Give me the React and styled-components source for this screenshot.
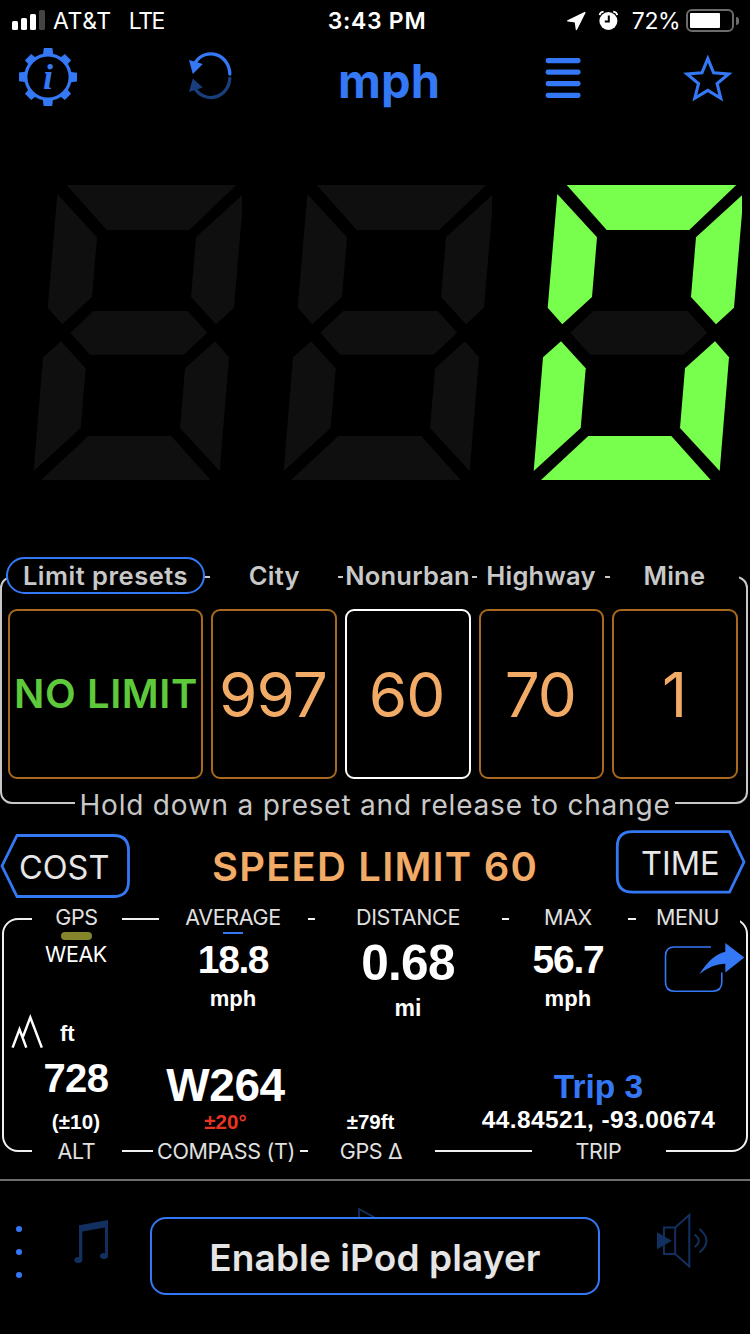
import styled, { createGlobalStyle } from 'styled-components'

const BLUE = '#3478f6'
const DIM_BLUE = '#12305f'
const ORANGE = '#f2ab66'
const GREEN = '#78ff4d'

const SEGMENTS = {
  a: '66.7,185 236.3,185 189.3,230 106.7,230',
  f: '57.3,194 97,237.3 92,297 62.3,324.3 47.7,307.7',
  b: '242,195.3 242,213 234,307.7 216,324.3 191,297 196,237.3',
  g: '93.3,311 187.7,311 207.3,332.7 183.7,354.7 90,354.7 70.3,332.7',
  e: '61,341.3 85.7,368.3 80.7,428 33.7,471 43,357.3',
  c: '215,341.3 229,357.3 219.7,471 180,428 185,368.3',
  d: '88.3,436 171.3,436 210.7,480 41,480',
}

const PRESETS = [
  { name: 'City', value: '997' },
  { name: 'Nonurban', value: '60', active: true },
  { name: 'Highway', value: '70' },
  { name: 'Mine', value: '1' },
]

function Digit({ lit = '' }) {
  return (
    <svg width="250" height="320" viewBox="0 170 250 320">
      {Object.entries(SEGMENTS).map(([key, points]) => (
        <polygon key={key} points={points} fill={lit.includes(key) ? GREEN : '#0f0f0f'} />
      ))}
    </svg>
  )
}

function StatusIcons() {
  return (
    <svg width="54" height="24" viewBox="566 9 54 24">
      <path
        d="M584.8 12.6 576.4 29.4 575.4 21.8 567.8 20.8Z"
        fill="#fff"
        stroke="#fff"
        strokeWidth="1.4"
        strokeLinejoin="round"
      />
      <circle cx="608.4" cy="21" r="9" fill="#fff" />
      <path d="M608.8 15.5V21.6H604.8" fill="none" stroke="#000" strokeWidth="2" />
      <path d="M599.6 15.2Q600 12 603.6 11.6M617.2 15.2Q616.8 12 613.2 11.6" fill="none" stroke="#fff" strokeWidth="1.8" />
    </svg>
  )
}

function GearIcon() {
  return (
    <svg width="60" height="60" viewBox="18 47 60 60">
      <circle cx="48" cy="77" r="22.2" fill="none" stroke={BLUE} strokeWidth="3.2" />
      {[0, 90, 180, 270].map((deg) => (
        <path key={deg} d="M43.8 48H52.4L53.4 56H42.8Z" fill={BLUE} transform={`rotate(${deg} 48 77)`} />
      ))}
      {[45, 135, 225, 315].map((deg) => (
        <path key={deg} d="M43.6 48.8H52.4L53 56H43Z" fill={BLUE} transform={`rotate(${deg} 48 77)`} />
      ))}
      <Info x="48" y="89.4" textAnchor="middle">i</Info>
    </svg>
  )
}

function ReloadIcon() {
  return (
    <svg width="46" height="54" viewBox="188 50 46 54">
      <path d="M229.8 74A19 20.4 0 0 0 195.6 62" fill="none" stroke={BLUE} strokeWidth="3.3" strokeLinecap="round" />
      <path d="M189 60 202.8 64 192.8 74Z" fill={BLUE} />
      <path d="M229.8 78.4A19 20 0 0 1 195.6 89.5" fill="none" stroke="#183e7c" strokeWidth="3.3" strokeLinecap="round" />
      <path d="M189 92 202.8 87.4 192.8 78.4Z" fill="#183e7c" />
    </svg>
  )
}

function ListIcon() {
  return (
    <svg width="36" height="44" viewBox="545 55 36 44">
      {[58, 69.5, 81, 92.8].map((y) => (
        <rect key={y} x="545.6" y={y} width="35" height="5.2" rx="2.4" fill={BLUE} />
      ))}
    </svg>
  )
}

function StarIcon() {
  return (
    <svg width="52" height="50" viewBox="682 52 52 50">
      <path
        d="M707.8 58.6 713.6 72.8 728.6 74 717.1 83.6 720.8 98.3 707.8 90.4 694.8 98.3 698.5 83.6 687 74 702 72.8Z"
        fill="none"
        stroke={BLUE}
        strokeWidth="3.1"
        strokeMiterlimit="10"
      />
    </svg>
  )
}

function ShareIcon() {
  return (
    <svg width="108" height="70" viewBox="638 929 108 70">
      <path
        d="M711 947H674.5Q665.5 947 665.5 956V982Q665.5 991.2 674.5 991.2H712.5Q721.8 991.2 721.8 982V972.5"
        fill="none"
        stroke={BLUE}
        strokeWidth="1.6"
      />
      <path d="M699.3 974.2Q712 954.5 725.3 951.8V943L744.3 957.4 725.3 972.4V963.8Q713 963.6 699.3 974.2Z" fill={BLUE} />
    </svg>
  )
}

function MountainIcon() {
  return (
    <svg width="44" height="38" viewBox="4 1012 44 38">
      <path
        d="M12.6 1047.6 19.5 1029.4 26.3 1047.6M23 1036.6 30.3 1017.4 41.8 1047.6"
        fill="none"
        stroke="#fff"
        strokeWidth="2.5"
        strokeMiterlimit="10"
      />
    </svg>
  )
}

function NoteIcon() {
  return (
    <svg width="36" height="46" viewBox="73 1219 36 46">
      <path d="M79 1225.2 108 1220V1256H105V1227.4L82.3 1231.4V1260H79Z" fill={DIM_BLUE} />
      <ellipse cx="78.4" cy="1260" rx="4" ry="3" fill={DIM_BLUE} />
      <ellipse cx="104" cy="1256" rx="4" ry="3" fill={DIM_BLUE} />
    </svg>
  )
}

function VolumeIcon() {
  return (
    <svg width="54" height="56" viewBox="656 1212 54 56">
      <path
        d="M663.9 1227.4H675.2V1254H663.9ZM675.2 1227.4 689.3 1215V1266.4L675.2 1254"
        fill="none"
        stroke={DIM_BLUE}
        strokeWidth="2"
      />
      <path d="M657 1232.3 671.8 1240.7 657 1249.3Z" fill={DIM_BLUE} />
      <path
        d="M694.6 1234.6Q703 1240.7 694.6 1247M699.4 1229Q713.6 1240.7 699.4 1252.6"
        fill="none"
        stroke={DIM_BLUE}
        strokeWidth="2"
      />
    </svg>
  )
}

function App() {
  return (
    <Screen>
      <GlobalStyle />
      <StatusBar>
        <Carrier>
          <Signal>
            <Bar $h={9} />
            <Bar $h={12} />
            <Bar $h={16} />
            <Bar $h={20} $off />
          </Signal>
          <StatusText $spacing={0.6}>AT&amp;T</StatusText>
          <StatusText $spacing={-1.4} $left={17}>LTE</StatusText>
        </Carrier>
        <Clock>3:43 PM</Clock>
        <StatusRight>
          <StatusIcons />
          <StatusText $spacing={-0.5} $left={12}>72%</StatusText>
          <Battery><Charge /></Battery>
          <Nub />
        </StatusRight>
      </StatusBar>

      <Toolbar>
        <GearIcon />
        <ReloadIcon />
        <Unit>mph</Unit>
        <ListIcon />
        <StarIcon />
      </Toolbar>

      <Display>
        <Digit />
        <Digit />
        <Digit lit="abcdef" />
      </Display>

      <PresetFrame>
        <PresetLegend>
          <Pill>Limit presets</Pill>
          {PRESETS.map((p) => (
            <PresetName key={p.name}>{p.name}</PresetName>
          ))}
        </PresetLegend>
        <PresetGrid>
          <NoLimit>NO LIMIT</NoLimit>
          {PRESETS.map((p) => (
            <Preset key={p.name} $active={p.active}>{p.value}</Preset>
          ))}
        </PresetGrid>
        <Hint>Hold down a preset and release to change</Hint>
      </PresetFrame>

      <LimitRow>
        <Tab>
          <svg width="131" height="66" viewBox="0 833 131 66">
            <path
              d="M17 835.5H113.5Q128.5 835.5 128.5 850.5V881.5Q128.5 896.5 113.5 896.5H17L2 866Z"
              fill="none"
              stroke={BLUE}
              strokeWidth="2.8"
            />
          </svg>
          <TabText $x={19}>COST</TabText>
        </Tab>
        <SpeedLimit>SPEED LIMIT 60</SpeedLimit>
        <Tab $right>
          <svg width="131" height="66" viewBox="615 829 131 66">
            <path
              d="M729.5 831.7H632.5Q617.3 831.7 617.3 846.7V877Q617.3 892.2 632.5 892.2H729.5L744 862Z"
              fill="none"
              stroke={BLUE}
              strokeWidth="2.8"
            />
          </svg>
          <TabText $x={26}>TIME</TabText>
        </Tab>
      </LimitRow>

      <StatsFrame>
        <Legend>
          <Tag $w={90}>GPS</Tag>
          <Tag $w={149} $gap={37}>AVERAGE</Tag>
          <Tag $w={187} $gap={7}>DISTANCE</Tag>
          <Tag $w={119} $gap={7}>MAX</Tag>
          <Tag $w={104} $gap={8}>MENU</Tag>
        </Legend>
        <StatsTop>
          <Cell>
            <GpsBar />
            <Weak>WEAK</Weak>
          </Cell>
          <Cell>
            <Underline />
            <Value $size={39} $h={44} $top={4} $spacing={-1.4}>18.8</Value>
            <Value $size={22} $h={24} $top={5}>mph</Value>
          </Cell>
          <Cell>
            <Value $size={49.5} $h={54} $top={7} $spacing={-0.7}>0.68</Value>
            <Value $size={23} $h={24} $top={6}>mi</Value>
          </Cell>
          <Cell>
            <Value $size={39} $h={44} $top={9} $spacing={-1.2}>56.7</Value>
            <Value $size={22} $h={24} $top={5} $spacing={0.2}>mph</Value>
          </Cell>
          <Cell>
            <ShareIcon />
          </Cell>
        </StatsTop>
        <StatsBottom>
          <Cell>
            <AltUnit>
              <MountainIcon />
              <Value $size={22} $h={34} $top={5}>ft</Value>
            </AltUnit>
            <Value $size={40} $h={40} $top={8} $spacing={-0.5}>728</Value>
            <Value $size={20.5} $h={24} $top={12} $spacing={0.2}>(±10)</Value>
          </Cell>
          <Cell>
            <Value $size={46} $h={48} $top={49} $spacing={-0.4}>W264</Value>
            <Value $size={20.5} $h={24} $top={1} $color="#e93423">±20°</Value>
          </Cell>
          <Cell $left={1}>
            <Value $size={20.5} $h={24} $top={98}>±79ft</Value>
          </Cell>
          <Cell $left={14}>
            <Value $size={33.5} $h={40} $top={55} $color={BLUE}>Trip 3</Value>
            <Value $size={24.5} $h={26} $spacing={0.4}>44.84521, -93.00674</Value>
          </Cell>
        </StatsBottom>
        <Legend>
          <Tag $w={90}>ALT</Tag>
          <Tag $w={147} $gap={31}>COMPASS (T)</Tag>
          <Tag $w={127} $gap={8}>GPS Δ</Tag>
          <Tag $w={134} $gap={97}>TRIP</Tag>
        </Legend>
      </StatsFrame>

      <Player>
        <Dots>
          <Dot />
          <Dot />
          <Dot />
        </Dots>
        <PlayerIcon $top={38}>
          <NoteIcon />
        </PlayerIcon>
        <EnableWrap>
          <PlayHint width="40" height="12" viewBox="356 1206 40 12">
            <path d="M359 1218V1209L380 1220.5" fill="none" stroke={DIM_BLUE} strokeWidth="1.8" />
          </PlayHint>
          <Enable>Enable iPod player</Enable>
        </EnableWrap>
        <PlayerIcon $top={31}>
          <VolumeIcon />
        </PlayerIcon>
      </Player>
    </Screen>
  )
}

export default App


const GlobalStyle = createGlobalStyle`
body{
margin:0;
background:#000;
}
svg{
display:block;
flex-shrink:0;
}
`

const Screen = styled.div`
width:750px;
height:1334px;
overflow:hidden;
background:#000;
color:#fff;
display:flex;
flex-direction:column;
font-family:Inter,"Liberation Sans",sans-serif;
white-space:nowrap;
`

const StatusBar = styled.div`
height:41px;
padding:0 11px 0 12px;
display:grid;
grid-template-columns:1fr auto 1fr;
align-items:center;
`
const Carrier = styled.div`
display:flex;
align-items:center;
`
const Signal = styled.div`
display:flex;
align-items:flex-end;
gap:3px;
height:20px;
margin:-1px 8px 0 0;
`
const Bar = styled.div`
width:6px;
height:${(p) => p.$h}px;
border-radius:1.5px;
background:${(p) => (p.$off ? '#434343' : '#fff')};
`
const StatusText = styled.span`
font-size:23px;
letter-spacing:${(p) => p.$spacing}px;
margin-left:${(p) => p.$left || 0}px;
`
const Clock = styled.span`
font-size:23px;
font-weight:600;
letter-spacing:0.7px;
margin-left:3px;
`
const StatusRight = styled.div`
display:flex;
align-items:center;
justify-content:flex-end;
`
const Battery = styled.div`
box-sizing:border-box;
width:48px;
height:23px;
margin-left:6px;
padding:2px;
border:2px solid #6c6c6c;
border-radius:6px;
`
const Charge = styled.div`
width:30px;
height:15px;
background:#fff;
border-radius:1px;
`
const Nub = styled.div`
width:3px;
height:8px;
margin-left:2px;
border-radius:0 4px 4px 0;
background:#6c6c6c;
`

const Toolbar = styled.div`
height:72px;
padding:0 16px 0 18px;
display:grid;
grid-template-columns:170px 97px 208px 52px 36px 1fr;
align-items:center;
& > :nth-child(4){
grid-column:5;
}
& > :last-child{
justify-self:end;
}
`
const Unit = styled.div`
height:48px;
line-height:48px;
padding-top:7px;
text-align:center;
font-size:47px;
font-weight:700;
color:${BLUE};
`
const Info = styled.text`
font-family:"Liberation Serif",serif;
font-size:36px;
font-weight:bold;
font-style:italic;
fill:${BLUE};
`

const Display = styled.div`
display:flex;
margin-top:57px;
`

const PresetFrame = styled.div`
box-sizing:border-box;
width:748px;
height:228px;
margin-top:86px;
border:2px solid #c8c8c8;
border-radius:12px;
flex-shrink:0;
`
const PresetLegend = styled.div`
display:grid;
grid-template-columns:199px repeat(4,128.4px);
column-gap:5px;
margin:-21px 0 0 4px;
`
const PresetName = styled.div`
box-sizing:border-box;
height:37px;
line-height:37px;
background:#000;
color:#c8c8c8;
text-align:center;
font-size:25.5px;
font-weight:600;
letter-spacing:0.2px;
`
const Pill = styled(PresetName)`
line-height:33px;
border:2px solid ${BLUE};
border-radius:19px;
letter-spacing:0.5px;
`
const PresetGrid = styled.div`
display:grid;
grid-template-columns:195px repeat(4,125.75px);
column-gap:8px;
margin:15px 0 0 6px;
`
const Preset = styled.div`
box-sizing:border-box;
height:170px;
line-height:167px;
border:2px solid ${(p) => (p.$active ? '#fff' : '#a8691e')};
border-radius:9px;
padding-right:2px;
text-align:center;
font-size:62px;
letter-spacing:-1px;
color:${ORANGE};
`
const NoLimit = styled(Preset)`
line-height:166px;
padding:0 0 0 1px;
font-size:40px;
font-weight:600;
color:#5dc93b;
letter-spacing:0.6px;
`
const Hint = styled.div`
width:600px;
height:32px;
line-height:32px;
margin:10px 0 0 73px;
background:#000;
color:#c8c8c8;
text-align:center;
font-size:28px;
letter-spacing:0.8px;
`

const LimitRow = styled.div`
height:76px;
margin-top:25px;
padding-right:4px;
display:flex;
justify-content:space-between;
flex-shrink:0;
`
const Tab = styled.div`
position:relative;
padding-top:${(p) => (p.$right ? 0 : 4)}px;
height:66px;
`
const TabText = styled.div`
position:absolute;
left:${(p) => p.$x}px;
bottom:-1px;
line-height:65px;
font-size:32.5px;
color:#e6e6e6;
`
const SpeedLimit = styled.div`
line-height:76px;
padding-left:4px;
font-size:40px;
font-weight:600;
color:${ORANGE};
letter-spacing:1.2px;
`

const StatsFrame = styled.div`
box-sizing:border-box;
width:746px;
height:234px;
margin:13px 0 0 2px;
border:2px solid #f0f0f0;
border-radius:16px;
flex-shrink:0;
`
const Legend = styled.div`
display:flex;
margin:-15px 0 0 28px;
&:last-child{
margin-top:0;
}
`
const Tag = styled.div`
box-sizing:border-box;
width:${(p) => p.$w}px;
margin-left:${(p) => p.$gap || 0}px;
padding-right:1px;
height:24px;
line-height:24px;
background:#000;
color:#e0e0e0;
text-align:center;
font-size:21.5px;
letter-spacing:-0.35px;
`
const StatsTop = styled.div`
display:grid;
grid-template-columns:144px 170px 180px 140px 108px;
height:83px;
`
const StatsBottom = styled.div`
display:grid;
grid-template-columns:144px 155px 134px 309px;
height:127px;
`
const Cell = styled.div`
display:flex;
flex-direction:column;
align-items:center;
padding-left:${(p) => p.$left || 0}px;
`
const Value = styled.div`
flex-shrink:0;
height:${(p) => p.$h}px;
line-height:${(p) => p.$h}px;
margin-top:${(p) => p.$top || 0}px;
font-family:"Liberation Sans",sans-serif;
font-weight:bold;
font-size:${(p) => p.$size}px;
letter-spacing:${(p) => p.$spacing || 0}px;
color:${(p) => p.$color || '#fff'};
& + &:last-child{
margin-bottom:-10px;
}
`
const GpsBar = styled.div`
width:31px;
height:7.5px;
margin-top:3.4px;
border-radius:4px;
background:#84842a;
`
const Weak = styled.div`
line-height:28px;
font-size:21.5px;
letter-spacing:-0.4px;
`
const Underline = styled.div`
width:20px;
height:2px;
margin-top:3px;
background:${BLUE};
`
const AltUnit = styled.div`
align-self:flex-start;
display:flex;
gap:12px;
height:38px;
`

const Player = styled.div`
flex:1;
margin-top:27px;
border-top:2px solid #6e6e6e;
display:flex;
align-items:flex-start;
`
const Dots = styled.div`
display:flex;
flex-direction:column;
gap:17px;
margin:44.5px 51px 0 16px;
`
const Dot = styled.div`
width:6px;
height:6px;
border-radius:50%;
background:${BLUE};
`
const PlayerIcon = styled.div`
padding-top:${(p) => p.$top}px;
`
const EnableWrap = styled.div`
position:relative;
margin:36px 56px 0 41px;
`
const PlayHint = styled.svg`
position:absolute;
left:206px;
top:-11px;
`
const Enable = styled.div`
position:relative;
box-sizing:border-box;
width:450px;
height:78px;
line-height:77px;
border:2px solid ${BLUE};
border-radius:16px;
background:#000;
color:#e5e5e5;
text-align:center;
font-size:37px;
font-weight:600;
letter-spacing:0.1px;
`
